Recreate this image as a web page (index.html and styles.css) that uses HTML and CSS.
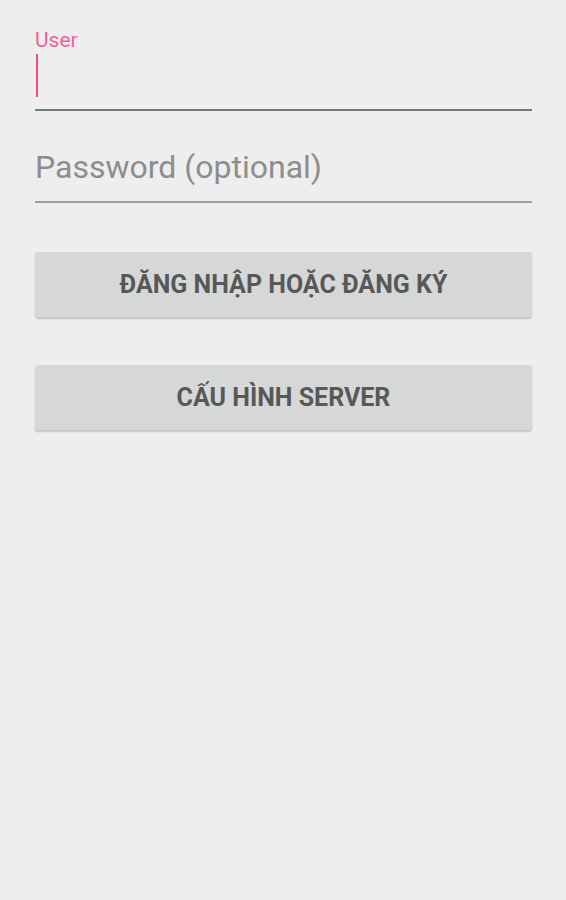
FILE: index.html
```html
<!DOCTYPE html>
<html lang="vi">
<head>
<meta charset="utf-8">
<link rel="stylesheet" href="styles.css">
</head>
<body>
<div class="form">
  <div class="field active">
    <div class="label">User</div>
    <div class="input"><span class="cursor"></span></div>
  </div>
  <div class="field">
    <div class="input placeholder">Password (optional)</div>
  </div>
  <button class="btn btn-first">ĐĂNG NHẬP HOẶC ĐĂNG KÝ</button>
  <button class="btn btn-second">CẤU HÌNH SERVER</button>
</div>
</body>
</html>
```
FILE: styles.css
```css
html, body {
  margin: 0;
  padding: 0;
  background: #eeeeee;
  height: 100%;
}
body {
  font-family: Roboto, "Noto Sans", sans-serif;
}
.form {
  padding: 29px 34px 0 35px;
  display: flex;
  flex-direction: column;
}
.field.active .label {
  color: #f0609a;
  font-size: 21px;
  line-height: 22px;
  height: 22px;
}
.field.active .input {
  height: 55px;
  border-bottom: 2px solid #777777;
  position: relative;
  margin-top: -1px;
}
.cursor {
  display: block;
  margin-top: 4px;
  width: 2px;
  height: 43px;
  background: #f0508a;
  margin-left: 1px;
}
.field + .field {
  margin-top: 36px;
}
.input.placeholder {
  font-size: 32px;
  line-height: 40px;
  padding-bottom: 14px;
  color: #8d8d8d;
  border-bottom: 2px solid #a0a0a0;
}
.btn {
  display: block;
  width: 100%;
  height: 65px;
  border: none;
  border-radius: 3px;
  background: #d6d7d7;
  box-shadow: 0 2px 2px rgba(0,0,0,0.18);
  color: #585858;
  font-family: Roboto, "Noto Sans", sans-serif;
  font-weight: 700;
  font-size: 25px;
  padding: 0;
}
.btn-first {
  margin-top: 49px;
}
.btn-second {
  margin-top: 48px;
}
```
